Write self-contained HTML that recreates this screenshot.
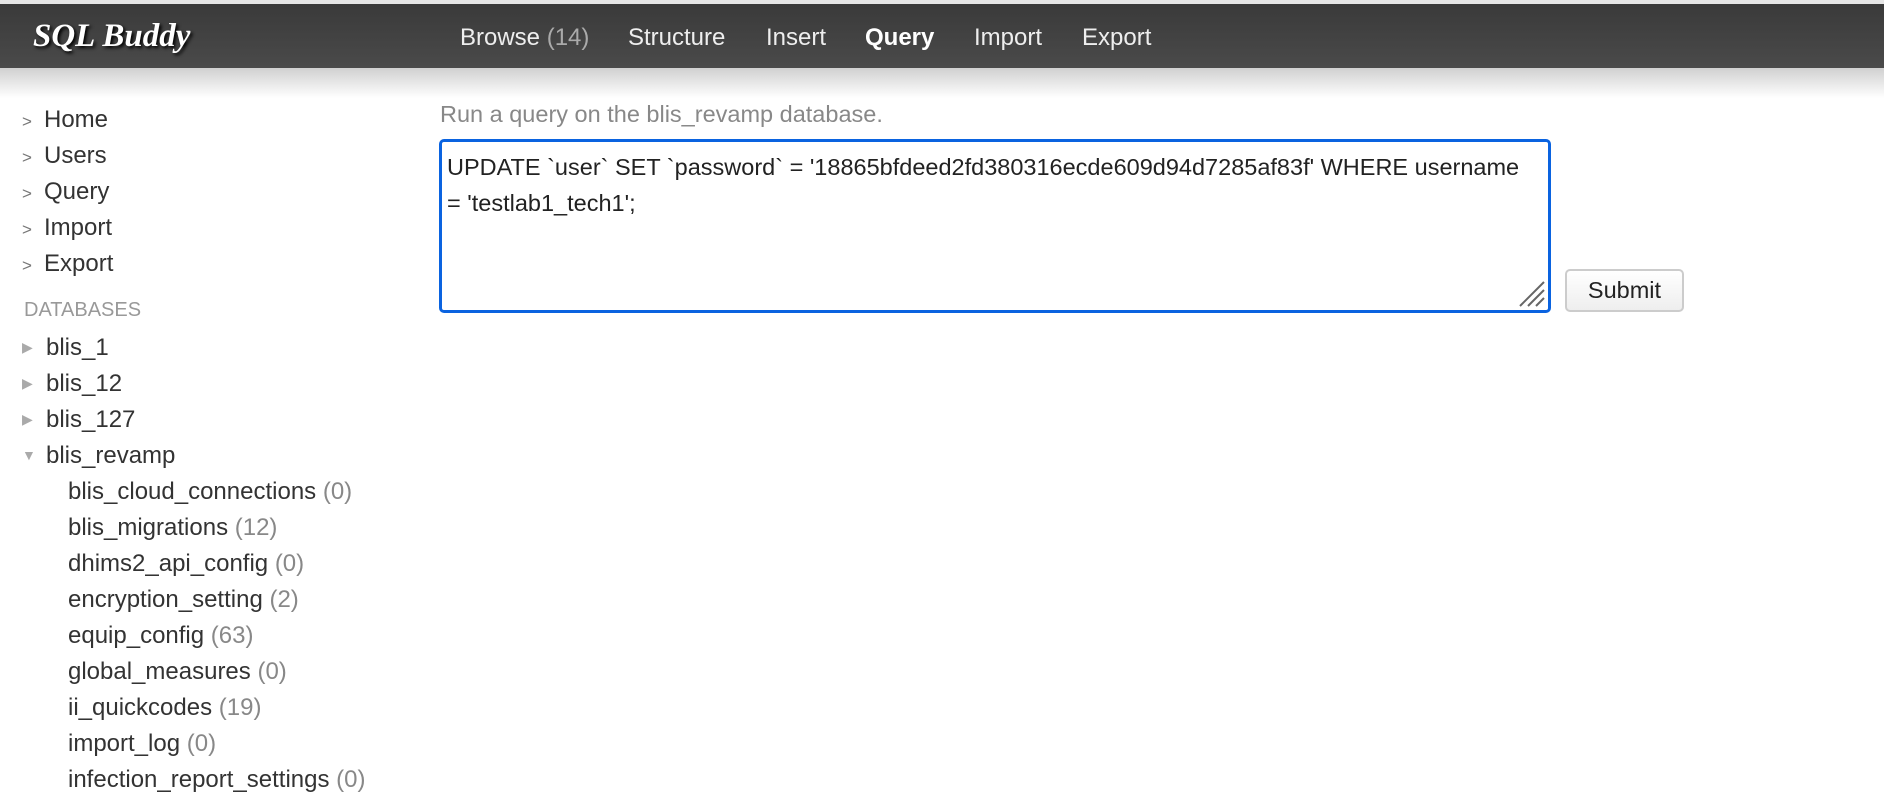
<!DOCTYPE html>
<html><head><meta charset="utf-8"><style>
*{margin:0;padding:0;box-sizing:border-box}
body{width:1884px;height:789px;overflow:hidden;background:#fff;font-family:"Liberation Sans",Arial,sans-serif;position:relative;color:#333}
#top{position:absolute;left:0;top:0;width:1884px;height:4px;background:#e6e6e6}
#hdr{position:absolute;left:0;top:4px;width:1884px;height:64px;background:linear-gradient(#3a3a3a,#4a4a4a)}
#shadow{position:absolute;left:0;top:68px;width:1884px;height:30px;background:linear-gradient(#d0d0d0,#fff)}
#logo{position:absolute;left:33px;top:18px;font-family:"Liberation Serif",serif;font-weight:bold;font-style:italic;font-size:33px;color:#fff;text-shadow:2px 2px 3px #000}
.nav{position:absolute;top:24px;font-size:24px;color:#eee}
.nav b{color:#fff}
.nav span{color:#aaa}
.side{position:absolute;left:22px;font-size:24px;color:#333;white-space:nowrap}
.side i{font-style:normal;color:#777;font-size:17px;display:inline-block;width:22px}
.db{position:absolute;left:22px;font-size:24px;white-space:nowrap}
.db i{font-style:normal;color:#aaa;font-size:14px;display:inline-block;width:24px;vertical-align:3px}
.tb{position:absolute;left:68px;font-size:24px;white-space:nowrap}
.tb span{color:#888}
#dbh{position:absolute;left:24px;top:299px;font-size:20px;color:#999}
#run{position:absolute;left:440px;top:101px;font-size:23.5px;color:#888}
#ta{position:absolute;left:439px;top:139px;width:1112px;height:174px;border:3px solid #0a63e0;border-radius:5px;padding:7px 22px 7px 5px;font-size:23.5px;line-height:36px;color:#222}
#btn{position:absolute;left:1565px;top:269px;width:119px;height:43px;border:2px solid #ccc;border-radius:5px;background:linear-gradient(#fff,#eee);font-size:23.5px;text-align:center;line-height:38px;color:#222}
</style></head><body>
<div id="top"></div><div id="hdr"></div><div id="shadow"></div>
<div id="logo">SQL Buddy</div>
<div class="nav" style="left:460px">Browse <span>(14)</span></div>
<div class="nav" style="left:628px">Structure</div>
<div class="nav" style="left:766px">Insert</div>
<div class="nav" style="left:865px"><b>Query</b></div>
<div class="nav" style="left:974px">Import</div>
<div class="nav" style="left:1082px">Export</div>

<div class="side" style="top:106px"><i>&gt;</i>Home</div>
<div class="side" style="top:142px"><i>&gt;</i>Users</div>
<div class="side" style="top:178px"><i>&gt;</i>Query</div>
<div class="side" style="top:214px"><i>&gt;</i>Import</div>
<div class="side" style="top:250px"><i>&gt;</i>Export</div>
<div id="dbh">DATABASES</div>
<div class="db" style="top:334px"><i>▶</i>blis_1</div>
<div class="db" style="top:370px"><i>▶</i>blis_12</div>
<div class="db" style="top:406px"><i>▶</i>blis_127</div>
<div class="db" style="top:442px"><i>▼</i>blis_revamp</div>
<div class="tb" style="top:478px">blis_cloud_connections <span>(0)</span></div>
<div class="tb" style="top:514px">blis_migrations <span>(12)</span></div>
<div class="tb" style="top:550px">dhims2_api_config <span>(0)</span></div>
<div class="tb" style="top:586px">encryption_setting <span>(2)</span></div>
<div class="tb" style="top:622px">equip_config <span>(63)</span></div>
<div class="tb" style="top:658px">global_measures <span>(0)</span></div>
<div class="tb" style="top:694px">ii_quickcodes <span>(19)</span></div>
<div class="tb" style="top:730px">import_log <span>(0)</span></div>
<div class="tb" style="top:766px">infection_report_settings <span>(0)</span></div>

<div id="run">Run a query on the blis_revamp database.</div>
<div id="ta">UPDATE `user` SET `password` = '18865bfdeed2fd380316ecde609d94d7285af83f' WHERE username = 'testlab1_tech1';
<svg style="position:absolute;right:2px;bottom:2px" width="28" height="28" viewBox="0 0 28 28"><path d="M2 26L26 2M10 26L26 10M18 26L26 18" stroke="#666" stroke-width="2"/></svg></div>
<div id="btn">Submit</div>
</body></html>
